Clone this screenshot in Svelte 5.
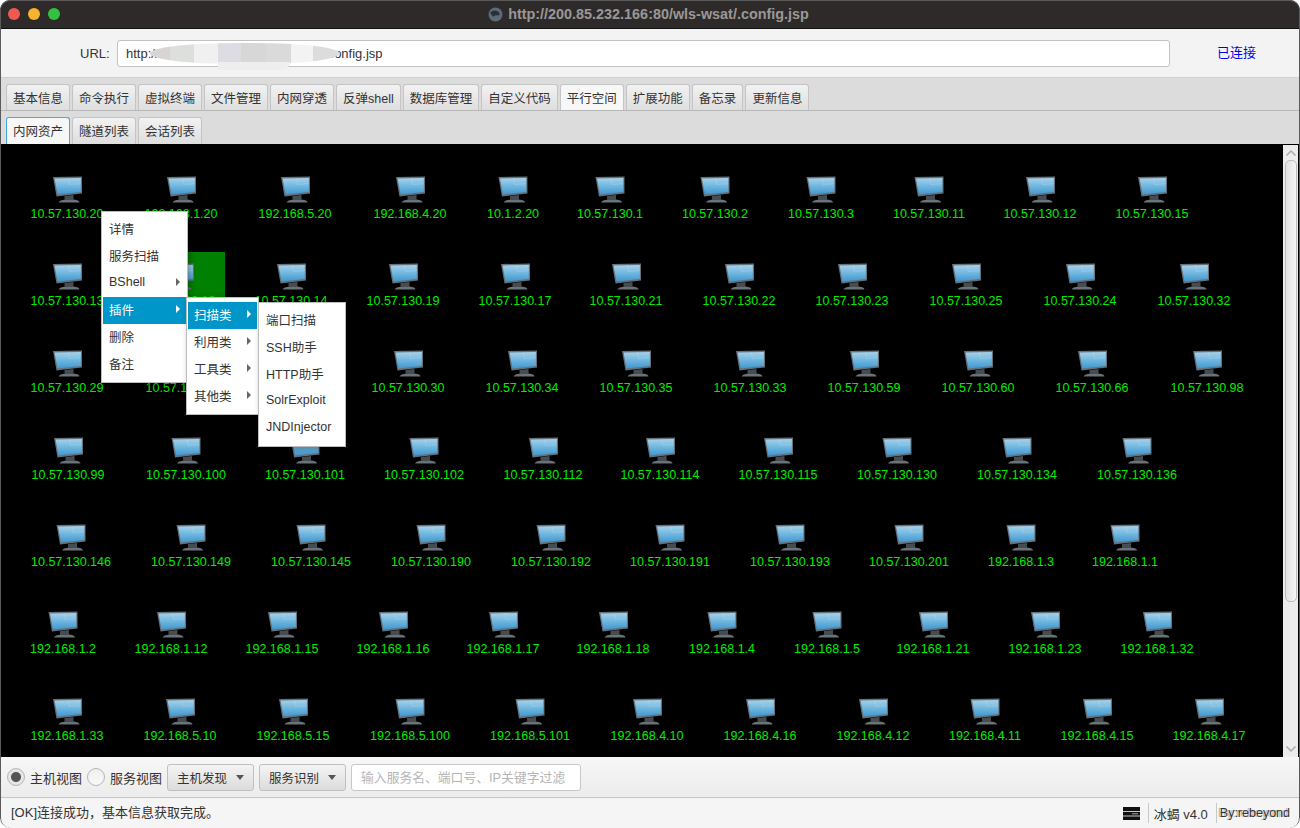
<script>
  const mainTabs = ["基本信息", "命令执行", "虚拟终端", "文件管理", "内网穿透", "反弹shell", "数据库管理", "自定义代码", "平行空间", "扩展功能", "备忘录", "更新信息"];
  const subTabs = ["内网资产", "隧道列表", "会话列表"];

  // each row: y of the icon top inside the canvas, then [center x, label]
  const rows = [
    [32, [[67, "10.57.130.20"], [181, "192.168.1.20"], [295, "192.168.5.20"], [410, "192.168.4.20"], [513, "10.1.2.20"], [610, "10.57.130.1"], [715, "10.57.130.2"], [821, "10.57.130.3"], [929, "10.57.130.11"], [1040, "10.57.130.12"], [1152, "10.57.130.15"]]],
    [119, [[67, "10.57.130.13"], [179, "10.57.130.18"], [291, "10.57.130.14"], [403, "10.57.130.19"], [515, "10.57.130.17"], [626, "10.57.130.21"], [739, "10.57.130.22"], [852, "10.57.130.23"], [966, "10.57.130.25"], [1080, "10.57.130.24"], [1194, "10.57.130.32"]]],
    [206, [[67, "10.57.130.29"], [182, "10.57.130.16"], [408, "10.57.130.30"], [522, "10.57.130.34"], [636, "10.57.130.35"], [750, "10.57.130.33"], [864, "10.57.130.59"], [978, "10.57.130.60"], [1092, "10.57.130.66"], [1207, "10.57.130.98"]]],
    [293, [[68, "10.57.130.99"], [186, "10.57.130.100"], [305, "10.57.130.101"], [424, "10.57.130.102"], [543, "10.57.130.112"], [660, "10.57.130.114"], [778, "10.57.130.115"], [897, "10.57.130.130"], [1017, "10.57.130.134"], [1137, "10.57.130.136"]]],
    [380, [[71, "10.57.130.146"], [191, "10.57.130.149"], [311, "10.57.130.145"], [431, "10.57.130.190"], [551, "10.57.130.192"], [670, "10.57.130.191"], [790, "10.57.130.193"], [909, "10.57.130.201"], [1021, "192.168.1.3"], [1125, "192.168.1.1"]]],
    [467, [[63, "192.168.1.2"], [171, "192.168.1.12"], [282, "192.168.1.15"], [393, "192.168.1.16"], [503, "192.168.1.17"], [613, "192.168.1.18"], [722, "192.168.1.4"], [827, "192.168.1.5"], [933, "192.168.1.21"], [1045, "192.168.1.23"], [1157, "192.168.1.32"]]],
    [554, [[67, "192.168.1.33"], [180, "192.168.5.10"], [293, "192.168.5.15"], [410, "192.168.5.100"], [530, "192.168.5.101"], [647, "192.168.4.10"], [760, "192.168.4.16"], [873, "192.168.4.12"], [985, "192.168.4.11"], [1097, "192.168.4.15"], [1209, "192.168.4.17"]]],
  ];

  const menu1 = [["详情"], ["服务扫描"], ["BShell", true], ["插件", true, true], ["删除"], ["备注"]];
  const menu2 = [["扫描类", true, true], ["利用类", true], ["工具类", true], ["其他类", true]];
  const menu3 = [["端口扫描"], ["SSH助手"], ["HTTP助手"], ["SolrExploit"], ["JNDInjector"]];
</script>

{#snippet monitor()}
  <svg class="pc" width="30" height="27" viewBox="0 0 30 27">
    <defs>
      <linearGradient id="scr" x1="0" y1="0" x2="0" y2="1">
        <stop offset="0" stop-color="#a6d2ea" />
        <stop offset="0.5" stop-color="#6fb6df" />
        <stop offset="1" stop-color="#3f97cf" />
      </linearGradient>
    </defs>
    <path d="M0.5 1 L29.5 0.5 L29.5 17.5 L4 20.5 Z" fill="#66707a" />
    <path d="M2 2.4 L28.4 2 L28.4 16 L5 18.6 Z" fill="url(#scr)" />
    <path d="M16 2.2 L17 8.5 L28.4 7.6" fill="none" stroke="#d6eaf5" stroke-opacity="0.3" stroke-width="0.7" />
    <path d="M12 20 L21 19 L21 23.5 L12 23.5 Z" fill="#454c52" />
    <path d="M6 26.5 Q7 24 13 23.5 L21 23.5 Q27 24 27 26.5 Z" fill="#6b7379" />
  </svg>
{/snippet}

{#snippet menu(items, cls)}
  <div class="menu {cls}">
    {#each items as [text, sub, active]}
      <div class="menu-item" class:active>
        <span>{text}</span>
        {#if sub}<i class="arrow"></i>{/if}
      </div>
    {/each}
  </div>
{/snippet}

<div class="window">
  <header class="titlebar">
    <div class="lights">
      <i class="red"></i><i class="yellow"></i><i class="green"></i>
    </div>
    <div class="title">
      <svg width="15" height="15" viewBox="0 0 14 14">
        <circle cx="7" cy="7" r="6.5" fill="#5d6b78" />
        <path d="M2 5 Q6 2 9 4 Q12 6 10 8 Q7 7 5 9 Q3 8 2 5 Z" fill="#27303a" />
      </svg>
      <span>http://200.85.232.166:80/wls-wsat/.config.jsp</span>
    </div>
  </header>

  <div class="urlbar">
    <label for="url">URL:</label>
    <div class="urlfield">
      <input id="url" value="http://200.85.232.166:80/wls-wsat/.config.jsp" readonly />
      <div class="smudge"></div>
    </div>
    <span class="status-link">已连接</span>
  </div>

  <nav class="tabs main">
    {#each mainTabs as t}
      <div class="tab" class:current={t === "平行空间"}>{t}</div>
    {/each}
  </nav>
  <nav class="tabs sub">
    {#each subTabs as t, i}
      <div class="tab" class:focused={i === 0}>{t}</div>
    {/each}
  </nav>

  <main class="canvas">
    <div class="selected"></div>
    {#each rows as [y, nodes]}
      {#each nodes as [x, label]}
        <div class="node" style="left: {x}px; top: {y}px">
          {@render monitor()}
          <span>{label}</span>
        </div>
      {/each}
    {/each}

    {@render menu(menu1, "m1")}
    {@render menu(menu2, "m2")}
    {@render menu(menu3, "m3")}

    <div class="scrollbar">
      <svg width="12" height="8" viewBox="0 0 12 8"><path d="M1.5 6.5 L6 2 L10.5 6.5" fill="none" stroke="#aaa" stroke-width="1.5" /></svg>
      <div class="thumb"></div>
      <svg width="12" height="8" viewBox="0 0 12 8"><path d="M1.5 1.5 L6 6 L10.5 1.5" fill="none" stroke="#aaa" stroke-width="1.5" /></svg>
    </div>
  </main>

  <div class="filterbar">
    <div class="radio on"></div>
    <span class="radio-label">主机视图</span>
    <div class="radio"></div>
    <span class="radio-label">服务视图</span>
    <button class="combo">主机发现<i></i></button>
    <button class="combo">服务识别<i></i></button>
    <input class="filter" placeholder="输入服务名、端口号、IP关键字过滤" />
  </div>

  <footer class="statusbar">
    <span class="msg">[OK]连接成功，基本信息获取完成。</span>
    <div class="right">
      <svg class="server" width="17" height="13" viewBox="0 0 17 13">
        <rect width="17" height="4" fill="#111" />
        <rect y="4.8" width="17" height="3.8" fill="#111" />
        <rect y="9.4" width="17" height="3.6" fill="#111" />
        <rect x="9" y="6.3" width="6" height="1" fill="#aaa" />
      </svg>
      <span class="sep"></span>
      <span class="ver">冰蝎 v4.0</span>
      <span class="sep"></span>
      <span class="by">By:rebeyond</span>
    </div>
  </footer>
</div>

<style>
  :global(body) {
    margin: 0;
    background: #fff;
  }

  .window {
    position: relative;
    width: 1300px;
    height: 828px;
    display: flex;
    flex-direction: column;
    overflow: hidden;
    font-family: "Liberation Sans", "Noto Sans CJK SC", sans-serif;
    font-size: 12.5px;
    color: #333;
    background: #f3f3f3;
    border-radius: 10px;
  }

  /* thin window rim, sits over everything */
  .window::after {
    content: "";
    position: absolute;
    inset: 0;
    box-sizing: border-box;
    border: 1px solid #5a5a5a;
    border-bottom: 0;
    border-radius: 10px;
    pointer-events: none;
  }

  .titlebar {
    height: 28px;
    flex: none;
    position: relative;
    display: flex;
    align-items: center;
    justify-content: center;
    background: #2e2a29;
    border-bottom: 1px solid #111;
  }

  .lights {
    position: absolute;
    left: 8px;
    top: 8px;
    display: flex;
    gap: 8px;
  }

  .lights i {
    width: 12px;
    height: 12px;
    border-radius: 50%;
  }

  .red { background: #ee5a52; }
  .yellow { background: #f6b32d; }
  .green { background: #33c23f; }

  .title {
    display: flex;
    align-items: center;
    gap: 5px;
    color: #9a9897;
    font-weight: bold;
    font-size: 14.4px;
    margin-left: -3px;
  }

  .urlbar {
    height: 49px;
    flex: none;
    display: flex;
    align-items: center;
    background: #f3f3f3;
    box-sizing: border-box;
    padding-left: 80px;
    border-bottom: 1px solid #d0d0d0;
    font-size: 13px;
  }

  .urlbar label {
    width: 37px;
  }

  .urlfield {
    position: relative;
    width: 1053px;
    height: 27px;
  }

  .urlfield input {
    width: 100%;
    height: 100%;
    box-sizing: border-box;
    border: 1px solid #c2c2c2;
    border-radius: 3px;
    padding: 0 8px;
    font: inherit;
    color: #333;
    background: #fff;
    outline: none;
  }

  /* redaction smear over the host part of the url */
  .smudge {
    position: absolute;
    left: 33px;
    top: 3px;
    width: 190px;
    height: 21px;
    border-radius: 45% / 50%;
    background: linear-gradient(90deg, #d8d4d4 0 10.5%, #dcdfdc 10.5% 23%, #f0f0f0 23% 36%, #dcdce2 36% 48%, #d6d7d6 48% 61%, #d9dad9 61% 74%, #f3f3f3 74% 86%, #dcdcdc 86%);
  }

  .smudge::after {
    content: "";
    position: absolute;
    left: 68px;
    top: 19px;
    width: 72px;
    height: 8px;
    background: #eee;
    border-radius: 0 0 30px 8px;
  }

  .status-link {
    margin-left: 47px;
    margin-bottom: 3px;
    color: #0000ee;
  }

  .tabs {
    flex: none;
    display: flex;
    gap: 2px;
    padding-left: 6px;
    align-items: flex-end;
    background: #dcdcdc;
    box-sizing: border-box;
    height: 33px;
  }

  .tabs.main {
    border-bottom: 1px solid #b8b8b8;
  }

  .tab {
    height: 26px;
    box-sizing: border-box;
    padding: 0 6px 1px;
    display: flex;
    align-items: center;
    border: 1px solid #c4c4c4;
    border-bottom: none;
    border-radius: 3px 3px 0 0;
    background: linear-gradient(#f2f2f2, #dedede);
    white-space: nowrap;
  }

  .tabs.sub .tab {
    height: 27px;
  }

  .tab.current {
    background: #f7f7f7;
  }

  .tab.focused {
    background: #f7f7f7;
    border-color: #4aa9dc;
  }

  .canvas {
    position: relative;
    flex: 1;
    background: #000;
    overflow: hidden;
  }

  .selected {
    position: absolute;
    left: 149px;
    top: 108px;
    width: 76px;
    height: 60px;
    background: #008000;
  }

  .node {
    position: absolute;
    transform: translateX(-50%);
    display: flex;
    flex-direction: column;
    align-items: center;
    gap: 3px;
    color: #00ee00;
    white-space: nowrap;
    line-height: 16px;
  }

  .menu {
    position: absolute;
    box-sizing: border-box;
    background: #fff;
    border: 1px solid #bdbdbd;
    padding: 4px 1px;
    box-shadow: 2px 2px 6px rgba(0, 0, 0, 0.3);
  }

  .m1 { left: 101px; top: 67px; width: 87px; }
  .m2 { left: 186px; top: 153px; width: 73px; }
  .m3 { left: 258px; top: 158px; width: 88px; }

  .menu-item {
    height: 27px;
    box-sizing: border-box;
    padding: 0 6px 3px;
    display: flex;
    align-items: center;
    justify-content: space-between;
    color: #333;
    white-space: nowrap;
  }

  .menu-item.active {
    background: #0096c9;
    color: #fff;
  }

  .arrow {
    width: 0;
    height: 0;
    border-left: 4px solid #666;
    border-top: 4px solid transparent;
    border-bottom: 4px solid transparent;
  }

  .menu-item.active .arrow {
    border-left-color: #fff;
  }

  .scrollbar {
    position: absolute;
    left: 1283px;
    top: 1px;
    bottom: 0;
    width: 15px;
    background: #ececec;
    display: flex;
    flex-direction: column;
    align-items: center;
    padding: 4px 0;
    box-sizing: border-box;
  }

  .thumb {
    width: 12px;
    height: 442px;
    margin-top: 3px;
    margin-bottom: auto;
    box-sizing: border-box;
    border: 1px solid #bcbcbc;
    border-radius: 5px;
    background: linear-gradient(90deg, #e2e2e2, #f6f6f6);
  }

  .filterbar {
    height: 41px;
    flex: none;
    box-sizing: border-box;
    display: flex;
    align-items: center;
    padding-left: 7px;
    background: linear-gradient(#f7f7f7, #ececec);
    border-bottom: 1px solid #c6c6c6;
  }

  .radio {
    width: 18px;
    height: 18px;
    box-sizing: border-box;
    border-radius: 50%;
    border: 1px solid #b5b5b5;
    background: linear-gradient(#eee, #fafafa);
  }

  .radio.on {
    background: radial-gradient(circle, #555 0 4.5px, #e6e6e6 5.5px);
  }

  .radio-label {
    margin: 0 5px;
    font-size: 13px;
  }

  .combo {
    width: 87px;
    height: 27px;
    margin-right: 5px;
    padding: 0 9px;
    box-sizing: border-box;
    display: flex;
    align-items: center;
    justify-content: space-between;
    font: inherit;
    color: #333;
    border: 1px solid #c0c0c0;
    border-radius: 3px;
    background: linear-gradient(#f4f4f4, #dcdcdc);
  }

  .combo i {
    width: 0;
    height: 0;
    border-top: 5px solid #555;
    border-left: 4.5px solid transparent;
    border-right: 4.5px solid transparent;
  }

  .filter {
    width: 230px;
    height: 27px;
    box-sizing: border-box;
    padding: 0 9px;
    font: inherit;
    font-size: 12.8px;
    border: 1px solid #c8c8c8;
    border-radius: 3px;
    background: #fff;
    outline: none;
  }

  .filter::placeholder {
    color: #b5b5b5;
  }

  .statusbar {
    height: 30px;
    flex: none;
    box-sizing: border-box;
    display: flex;
    align-items: center;
    justify-content: space-between;
    padding: 0 10px 0 11px;
    background: #f5f5f5;
    font-size: 13px;
  }

  .msg {
    margin-bottom: 3px;
  }

  .right {
    display: flex;
    align-items: center;
  }

  .server {
    margin-right: 8px;
  }

  .sep {
    width: 1px;
    height: 20px;
    background: #c8c8c8;
  }

  .ver {
    margin: 0 8px 0 5px;
    color: #333;
  }

  .by {
    margin-left: 3px;
    font-size: 12.5px;
    text-shadow: -2px 0 #bbb;
  }
</style>
